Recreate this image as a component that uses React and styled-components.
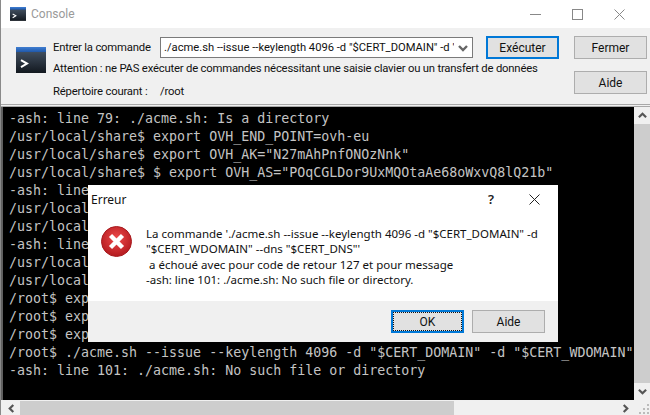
import React from "react";
import styled, { createGlobalStyle } from "styled-components";

const Global = createGlobalStyle`
  html, body { margin: 0; padding: 0; width: 650px; height: 415px; overflow: hidden; background: #fff; }
  * { box-sizing: border-box; }
`;
const UI = `"Noto Sans", "Liberation Sans", sans-serif`;
const Narrow = `Roboto, "Liberation Sans", sans-serif`;

const Window = styled.div`
  position: relative; width: 650px; height: 415px; display: flex; flex-direction: column;
  font-family: ${UI}; font-size: 12px; color: #111; background: #f0f0f0;
  border-left: 1px solid #8a8a8a; overflow: hidden;
`;
const TitleBar = styled.div`
  height: 28px; flex: none; background: #fff; display: flex; align-items: center; padding-left: 9px;
`;
const TitleText = styled.span`
  margin-left: 5px; font-family: ${Narrow}; font-size: 12px; color: #9a9a9a;
`;
const WinButtons = styled.div`
  margin-left: auto; display: flex; align-items: center; gap: 31px; padding-right: 25px;
`;
const ToolPanel = styled.div`
  height: 77px; flex: none; background: #f0f0f0; border-bottom: 1px solid #a8a8a8;
  display: flex; padding: 8px 3px 0 15px; font-family: ${Narrow}; font-size: 11.3px; letter-spacing: -.2px;
`;
const BigIconWrap = styled.div`
  flex: none; width: 30px; padding-top: 11px; margin-right: 7px; height: 40px;
`;
const Form = styled.div`
  flex: none; width: 402px; display: flex; flex-direction: column;
`;
const CommandRow = styled.div`
  display: flex; align-items: center; height: 21px; margin-top: 1px;
`;
const Label = styled.span`
  width: 107px; flex: none; white-space: nowrap;
`;
const Combo = styled.div`
  width: 313px; flex: none; height: 21px; background: #fff; border: 1px solid #7a7a7a;
  display: flex; align-items: center; padding-left: 3px; overflow: hidden; white-space: nowrap;
`;
const ComboText = styled.span`
  flex: 1; overflow: hidden; font-size: 11.2px; letter-spacing: 0; font-variant-ligatures: none;
`;
const ComboArrow = styled.span`
  flex: none; width: 18px; display: flex; justify-content: center;
`;
const Warning = styled.div`
  margin-top: 2px; white-space: nowrap; height: 18px; line-height: 18px; width: 402px;
`;
const Cwd = styled.div`
  margin-top: 5px; white-space: nowrap; height: 18px; line-height: 18px;
  display: flex;
`;
const CwdLabel = styled.span`width: 107px;`;
const Buttons = styled.div`
  margin-left: auto; display: grid; grid-template-columns: 73px 73px; column-gap: 15px; row-gap: 12px;
  align-content: start;
`;
const Button = styled.div`
  width: 73px; height: 23px; display: flex; align-items: center; justify-content: center;
  background: #e1e1e1; border: ${p => (p.$primary ? "2px solid #0078d7" : "1px solid #adadad")};
  position: relative; font-family: ${Narrow}; font-size: 12px; letter-spacing: 0; color: #111;
  grid-column: ${p => p.$col || "auto"};
`;
const FocusRing = styled.span`
  position: absolute; inset: 0; border: 1px dotted #111;
`;
const Middle = styled.div`
  flex: 1; min-height: 0; display: flex; margin-top: 1px; border-top: 1px solid #a8a8a8;
`;
const Terminal = styled.div`
  flex: 1; background: #000; border-left: 2px solid #606060; padding: 3px 0 0 6px;
  font-family: "DejaVu Sans Mono", "Liberation Mono", monospace; font-size: 13.3px; line-height: 18px;
  color: #c4c4c4; white-space: pre; overflow: hidden;
`;
const VScroll = styled.div`
  width: 16px; flex: none; background: #f0f0f0; display: flex; flex-direction: column; align-items: stretch;
`;
const VThumb = styled.div`
  flex: 1; background: #cdcdcd;
`;
const ScrollEnd = styled.div`
  height: 17px; flex: none; display: flex; align-items: center; justify-content: center; background: #f0f0f0;
`;
const HScroll = styled.div`
  height: 15px; flex: none; display: flex; background: #f0f0f0; margin-left: 2px; padding-top: 1px;
`;
const HEnd = styled.div`
  width: 17px; flex: none; display: flex; align-items: center; justify-content: center;
`;
const HThumb = styled.div`
  flex: 1; background: #cdcdcd;
`;
const HRest = styled.div`
  width: 196px; flex: none; background: #f0f0f0;
  display: flex; align-items: center;
`;
const RestSpace = styled.div`flex: 1;`;
const Grip = styled.div`
  width: 16px; height: 14px; flex: none; display: flex; align-items: flex-end; justify-content: flex-end;
`;
const Dialog = styled.div`
  position: absolute; left: 87px; top: 185px; width: 470px; height: 157px; background: #fff;
  display: flex; flex-direction: column;
`;
const DialogTitle = styled.div`
  height: 28px; flex: none; display: flex; align-items: center; padding-left: 3px; font-size: 12px; color: #111;
`;
const Help = styled.span`
  margin-left: auto; font-size: 13px; font-weight: 600; width: 20px; text-align: center; color: #222;
`;
const DialogClose = styled.span`
  margin-left: 28px; margin-right: 18px; display: flex;
`;
const DialogBody = styled.div`
  flex: 1; display: flex; padding: 12px 0 0 13px; background: #fff;
`;
const ErrorWrap = styled.div`flex: none; width: 45px; padding-top: 1px;`;
const Message = styled.div`
  font-size: 11.5px; line-height: 15.3px; color: #111; white-space: pre; padding-top: 1px;
`;
const DialogFooter = styled.div`
  height: 41px; flex: none; background: #f0f0f0; display: flex; justify-content: flex-end; gap: 8px; padding: 9px 13px 0 0;
`;

const ConsoleIcon = ({ size }) => (
  <svg width={size} height={size * 0.87} viewBox="0 0 30 26" style={{ display: "block" }}>
    <defs>
      <linearGradient id="cbody" x1="0" y1="0" x2="0" y2="1">
        <stop offset="0" stopColor="#4b5a6c" />
        <stop offset="1" stopColor="#12181f" />
      </linearGradient>
      <linearGradient id="cbar" x1="0" y1="0" x2="0" y2="1">
        <stop offset="0" stopColor="#3f7fd4" />
        <stop offset="1" stopColor="#1f57a8" />
      </linearGradient>
    </defs>
    <rect width="30" height="26" fill="url(#cbody)" />
    <rect width="30" height="5" fill="url(#cbar)" />
    <path d="M5 13 L11 16.5 L5 20" stroke="#fff" strokeWidth="2" fill="none" />
  </svg>
);

const Chevron = ({ d, w = 9, h = 9, color = "#555" }) => (
  <svg width={w} height={h} viewBox="0 0 10 10" style={{ display: "block" }}>
    <path d={d} stroke={color} strokeWidth="2.4" fill="none" />
  </svg>
);

const ErrorIcon = () => (
  <svg width="31" height="31" viewBox="0 0 31 31" style={{ display: "block" }}>
    <defs>
      <radialGradient id="err" cx="50%" cy="40%" r="60%">
        <stop offset="0" stopColor="#ee4a4a" />
        <stop offset="1" stopColor="#b41a1f" />
      </radialGradient>
    </defs>
    <circle cx="15.5" cy="15.5" r="15" fill="url(#err)" stroke="#a81c20" strokeWidth="1" />
    <path d="M9.5 9.5 L21.5 21.5 M21.5 9.5 L9.5 21.5" stroke="#fff" strokeWidth="4.4" />
  </svg>
);

const lines = [
  "-ash: line 79: ./acme.sh: Is a directory",
  "/usr/local/share$ export OVH_END_POINT=ovh-eu",
  '/usr/local/share$ export OVH_AK="N27mAhPnfONOzNnk"',
  '/usr/local/share$ $ export OVH_AS="POqCGLDor9UxMQOtaAe68oWxvQ8lQ21b"',
  "-ash: line",
  "/usr/local",
  "/usr/local",
  "-ash: line",
  "/usr/local",
  "/usr/local",
  "/root$ exp",
  "/root$ exp",
  "/root$ exp",
  '/root$ ./acme.sh --issue --keylength 4096 -d "$CERT_DOMAIN" -d "$CERT_WDOMAIN"',
  "-ash: line 101: ./acme.sh: No such file or directory",
];

export default function App() {
  return (
    <>
      <Global />
      <Window>
        <TitleBar>
          <ConsoleIcon size={16} />
          <TitleText>Console</TitleText>
          <WinButtons>
            <svg width="11" height="11" viewBox="0 0 11 11"><path d="M0 5.5H11" stroke="#888" /></svg>
            <svg width="11" height="11" viewBox="0 0 11 11"><rect x=".5" y=".5" width="10" height="10" fill="none" stroke="#888" /></svg>
            <svg width="11" height="11" viewBox="0 0 11 11"><path d="M.5 .5L10.5 10.5M10.5 .5L.5 10.5" stroke="#888" /></svg>
          </WinButtons>
        </TitleBar>
        <ToolPanel>
          <BigIconWrap><ConsoleIcon size={30} /></BigIconWrap>
          <Form>
            <CommandRow>
              <Label>Entrer la commande</Label>
              <Combo>
                <ComboText>./acme.sh --issue --keylength 4096 -d "$CERT_DOMAIN" -d '</ComboText>
                <ComboArrow><Chevron d="M1 3 L5 7 L9 3" w={10} h={10} color="#666" /></ComboArrow>
              </Combo>
            </CommandRow>
            <Warning>Attention : ne PAS exécuter de commandes nécessitant une saisie clavier ou un transfert de données</Warning>
            <Cwd><CwdLabel>Répertoire courant :</CwdLabel><span>/root</span></Cwd>
          </Form>
          <Buttons>
            <Button $primary>Exécuter</Button>
            <Button>Fermer</Button>
            <Button $col="2">Aide</Button>
          </Buttons>
        </ToolPanel>
        <Middle>
          <Terminal>{lines.join("\n")}</Terminal>
          <VScroll>
            <ScrollEnd><Chevron d="M1 7 L5 3 L9 7" /></ScrollEnd>
            <VThumb />
            <ScrollEnd><Chevron d="M1 3 L5 7 L9 3" /></ScrollEnd>
          </VScroll>
        </Middle>
        <HScroll>
          <HEnd><Chevron d="M7 1 L3 5 L7 9" /></HEnd>
          <HThumb />
          <HRest>
            <RestSpace />
            <HEnd><Chevron d="M3 1 L7 5 L3 9" /></HEnd>
            <Grip>
              <svg width="12" height="12" viewBox="0 0 12 12">
                <path d="M9 1h2v2H9zM5 5h2v2H5zM9 5h2v2H9zM1 9h2v2H1zM5 9h2v2H5zM9 9h2v2H9z" fill="#bbb" />
              </svg>
            </Grip>
          </HRest>
        </HScroll>
        <Dialog>
          <DialogTitle>
            Erreur
            <Help>?</Help>
            <DialogClose>
              <svg width="11" height="11" viewBox="0 0 11 11"><path d="M.5 .5L10.5 10.5M10.5 .5L.5 10.5" stroke="#222" /></svg>
            </DialogClose>
          </DialogTitle>
          <DialogBody>
            <ErrorWrap><ErrorIcon /></ErrorWrap>
            <Message>{`La commande './acme.sh --issue --keylength 4096 -d "$CERT_DOMAIN" -d
"$CERT_WDOMAIN" --dns "$CERT_DNS"'
 a échoué avec pour code de retour 127 et pour message
-ash: line 101: ./acme.sh: No such file or directory.`}</Message>
          </DialogBody>
          <DialogFooter>
            <Button $primary><FocusRing />OK</Button>
            <Button>Aide</Button>
          </DialogFooter>
        </Dialog>
      </Window>
    </>
  );
}
